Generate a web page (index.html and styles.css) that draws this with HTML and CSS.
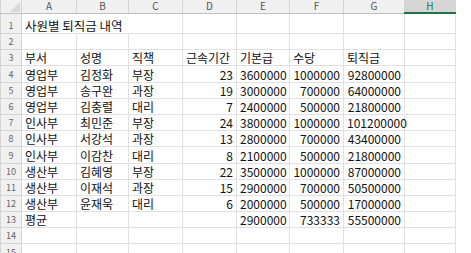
FILE: index.html
```html
<!DOCTYPE html>
<html>
<head>
  <title>사원별 퇴직금 내역</title>
  <link rel="stylesheet" href="styles.css">
</head>
<body>

<table class="sheet">
  <colgroup>
    <col class="c-row">
    <col class="c-a"><col class="c-b"><col class="c-c"><col class="c-d">
    <col class="c-e"><col class="c-f"><col class="c-g"><col class="c-h">
  </colgroup>
  <tr class="col-head">
    <th class="corner"><svg width="10" height="10" viewBox="0 0 10 10"><polygon points="10,0 10,10 0,10" fill="#d8d8d8"/></svg></th>
    <th>A</th><th>B</th><th>C</th><th>D</th><th>E</th><th>F</th><th>G</th><th class="sel">H</th>
  </tr>
  <tr class="title-row">
    <th>1</th><td colspan="3" class="txt title">사원별 퇴직금 내역</td><td></td><td></td><td></td><td></td><td></td>
  </tr>
  <tr><th>2</th><td></td><td></td><td></td><td></td><td></td><td></td><td></td><td></td></tr>
  <tr>
    <th>3</th><td class="txt">부서</td><td class="txt">성명</td><td class="txt">직책</td><td class="txt">근속기간</td><td class="txt">기본급</td><td class="txt">수당</td><td class="txt">퇴직금</td><td></td>
  </tr>
  <tr><th>4</th><td class="txt">영업부</td><td class="txt">김정화</td><td class="txt">부장</td><td>23</td><td>3600000</td><td>1000000</td><td>92800000</td><td></td></tr>
  <tr><th>5</th><td class="txt">영업부</td><td class="txt">송구완</td><td class="txt">과장</td><td>19</td><td>3000000</td><td>700000</td><td>64000000</td><td></td></tr>
  <tr><th>6</th><td class="txt">영업부</td><td class="txt">김충렬</td><td class="txt">대리</td><td>7</td><td>2400000</td><td>500000</td><td>21800000</td><td></td></tr>
  <tr><th>7</th><td class="txt">인사부</td><td class="txt">최민준</td><td class="txt">부장</td><td>24</td><td>3800000</td><td>1000000</td><td>101200000</td><td></td></tr>
  <tr><th>8</th><td class="txt">인사부</td><td class="txt">서강석</td><td class="txt">과장</td><td>13</td><td>2800000</td><td>700000</td><td>43400000</td><td></td></tr>
  <tr><th>9</th><td class="txt">인사부</td><td class="txt">이감찬</td><td class="txt">대리</td><td>8</td><td>2100000</td><td>500000</td><td>21800000</td><td></td></tr>
  <tr><th>10</th><td class="txt">생산부</td><td class="txt">김혜영</td><td class="txt">부장</td><td>22</td><td>3500000</td><td>1000000</td><td>87000000</td><td></td></tr>
  <tr><th>11</th><td class="txt">생산부</td><td class="txt">이재석</td><td class="txt">과장</td><td>15</td><td>2900000</td><td>700000</td><td>50500000</td><td></td></tr>
  <tr><th>12</th><td class="txt">생산부</td><td class="txt">윤재욱</td><td class="txt">대리</td><td>6</td><td>2000000</td><td>500000</td><td>17000000</td><td></td></tr>
  <tr><th>13</th><td class="txt">평균</td><td></td><td></td><td></td><td>2900000</td><td>733333</td><td>55500000</td><td></td></tr>
  <tr><th>14</th><td></td><td></td><td></td><td></td><td></td><td></td><td></td><td></td></tr>
  <tr><th>15</th><td></td><td></td><td></td><td></td><td></td><td></td><td></td><td></td></tr>
</table>

</body>
</html>
```

FILE: styles.css
```css
body { margin: 0; background: #fff; font-family: "Noto Sans CJK KR", "Noto Sans", sans-serif; overflow: hidden; }

.sheet { border-collapse: collapse; table-layout: fixed; width: 455px; font-size: 12px; color: #111; }
.c-row { width: 21px; }
.c-a { width: 55px; }
.c-b { width: 52px; }
.c-c { width: 54px; }
.c-d { width: 54px; }
.c-e { width: 53px; }
.c-f { width: 54px; }
.c-g { width: 61px; }
.c-h { width: 51px; }

.sheet td, .sheet th { border: 1px solid #e1e1e1; padding: 0 3px; height: 15.2px; line-height: 14px; vertical-align: bottom; white-space: nowrap; overflow: visible; }
.sheet td { text-align: right; }
.sheet td.txt { text-align: left; }

.sheet th { background: #f0f0f0; color: #666; font-weight: normal; font-size: 9px; text-align: center; padding: 0; border-color: #d4d4d4; }

.col-head th { height: 11px; line-height: 12px; font-size: 10px; color: #555; vertical-align: middle; border-top: none; border-bottom-color: #c0c0c0; }
.col-head th.sel { background: #d6d6d6; border-bottom: 2px solid #217346; color: #217346; }
.corner { position: relative; }
.corner svg { position: absolute; right: 1px; bottom: 1px; }

.title-row td, .title-row th { height: 19px; }
.title { font-size: 12.5px; }
```
